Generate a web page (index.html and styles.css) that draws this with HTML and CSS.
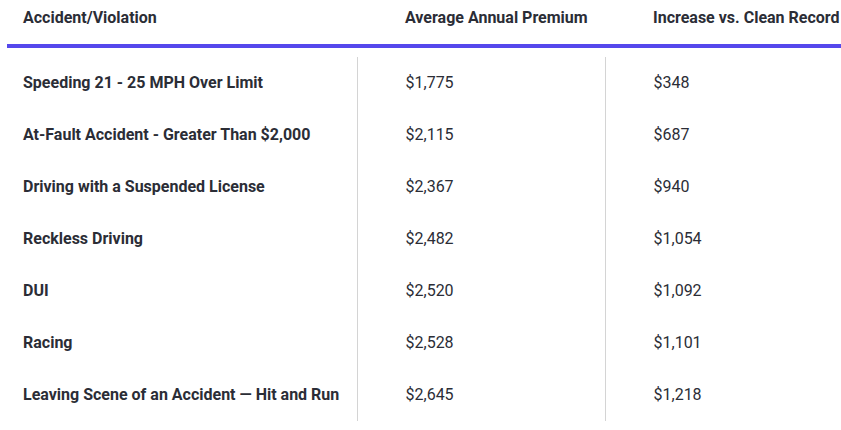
FILE: index.html
```html
<!DOCTYPE html>
<html lang="en">
<head>
<meta charset="utf-8">
<title>Accident/Violation Premiums</title>
<link rel="stylesheet" href="styles.css">
</head>
<body>
<div class="wrap">
<table class="rates">
  <colgroup>
    <col class="c1"><col class="c2"><col class="c3">
  </colgroup>
  <thead>
    <tr>
      <th class="first">Accident/Violation</th>
      <th>Average Annual Premium</th>
      <th>Increase vs. Clean Record</th>
    </tr>
  </thead>
  <tbody>
    <tr class="spacer"><td colspan="3"></td></tr>
    <tr><td class="name">Speeding 21 - 25 MPH Over Limit</td><td class="val">$1,775</td><td class="val last">$348</td></tr>
    <tr><td class="name">At-Fault Accident - Greater Than $2,000</td><td class="val">$2,115</td><td class="val last">$687</td></tr>
    <tr><td class="name">Driving with a Suspended License</td><td class="val">$2,367</td><td class="val last">$940</td></tr>
    <tr><td class="name">Reckless Driving</td><td class="val">$2,482</td><td class="val last">$1,054</td></tr>
    <tr><td class="name">DUI</td><td class="val">$2,520</td><td class="val last">$1,092</td></tr>
    <tr><td class="name">Racing</td><td class="val">$2,528</td><td class="val last">$1,101</td></tr>
    <tr><td class="name">Leaving Scene of an Accident — Hit and Run</td><td class="val">$2,645</td><td class="val last">$1,218</td></tr>
  </tbody>
</table>
</div>
</body>
</html>
```
FILE: styles.css
```css
html, body {
  margin: 0;
  padding: 0;
  background: #ffffff;
}
body {
  font-family: Roboto, "Liberation Sans", Arial, sans-serif;
  color: #2b2d36;
  overflow: hidden;
}
.wrap {
  padding-left: 7px;
  width: 860px;
}
.rates {
  border-collapse: collapse;
  table-layout: fixed;
  width: 860px;
}
.c1 { width: 350px; }
.c2 { width: 248px; }
.c3 { width: 262px; }
.rates th {
  text-align: left;
  font-size: 16px;
  font-weight: 700;
  line-height: 20px;
  padding: 8px 0 16px 48px;
  border-bottom: 4px solid #5548ec;
  white-space: nowrap;
}
.rates th.first {
  padding-left: 16px;
}
.spacer td {
  height: 9px;
  padding: 0;
}
.rates td.name,
.rates td.val {
  height: 52px;
  padding: 0 0 0 48px;
  font-size: 16px;
  line-height: 20px;
  vertical-align: middle;
  white-space: nowrap;
  border-right: 1px solid #d4d4d4;
}
.rates td.name {
  padding-left: 16px;
  font-weight: 700;
}
.rates td.val {
  font-weight: 400;
}
.rates td.last {
  border-right: none;
}
```
